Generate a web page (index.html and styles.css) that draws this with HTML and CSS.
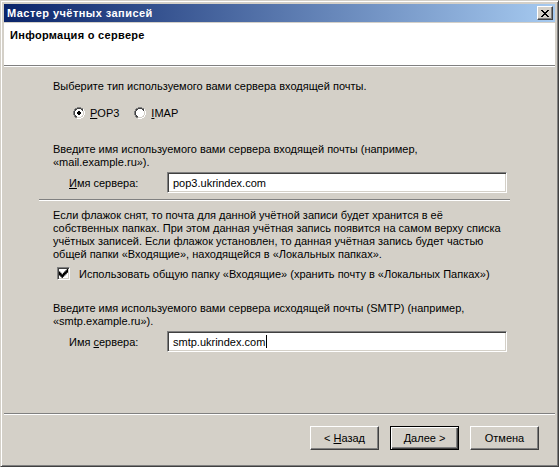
FILE: index.html
```html
<!DOCTYPE html>
<html lang="ru">
<head>
<meta charset="utf-8">
<title>Мастер учётных записей</title>
<link rel="stylesheet" href="styles.css">
</head>
<body>
<div class="window">
  <div class="titlebar">
    <span class="title-text">Мастер учётных записей</span>
    <span class="close-btn"><svg width="8" height="7" viewBox="0 0 8 7"><path d="M0 0h2v1h1v1h2V1h1V0h2v1H7v1H6v1H5v1h1v1h1v1h1v1H6V6H5V5H3v1H2v1H0V6h1V5h1V4h1V3H2V2H1V1H0z" fill="#000"/></svg></span>
  </div>
  <div class="header">
    <div class="header-title">Информация о сервере</div>
  </div>
  <div class="content">
    <p class="text first">Выберите тип используемого вами сервера входящей почты.</p>
    <div class="radio-row">
      <label class="radio"><span class="radio-box checked"><svg width="12" height="12" viewBox="0 0 12 12"><path d="M4 0h4v1h2v1h1v2h1v4h-1v2h-1v1H8v1H4v-1H2v-1H1V8H0V4h1V2h1V1h2z" fill="#808080"/><path d="M4 1h4v1h2v2h1v4h-1v2H8v1H4v-1H2V8H1V4h1V2h2z" fill="#404040"/><path d="M10 2h1v2h1v4h-1v2h-1v1H8v1H4v-1h4v-1h2V8h1V4h-1z" fill="#fff"/><path d="M10 3v1h1v4h-1v2H8v1H4v-1h4V8h2V4z" fill="#d4d0c8"/><path d="M4 2h4v1h1v1h1v4H9v1H8v1H4V9H3V8H2V4h1V3h1z" fill="#fff"/><path d="M5 4h2v1h1v2H7v1H5V7H4V5h1z" fill="#000"/></svg></span><span><u>P</u>OP3</span></label>
      <label class="radio"><span class="radio-box"><svg width="12" height="12" viewBox="0 0 12 12"><path d="M4 0h4v1h2v1h1v2h1v4h-1v2h-1v1H8v1H4v-1H2v-1H1V8H0V4h1V2h1V1h2z" fill="#808080"/><path d="M4 1h4v1h2v2h1v4h-1v2H8v1H4v-1H2V8H1V4h1V2h2z" fill="#404040"/><path d="M10 2h1v2h1v4h-1v2h-1v1H8v1H4v-1h4v-1h2V8h1V4h-1z" fill="#fff"/><path d="M10 3v1h1v4h-1v2H8v1H4v-1h4V8h2V4z" fill="#d4d0c8"/><path d="M4 2h4v1h1v1h1v4H9v1H8v1H4V9H3V8H2V4h1V3h1z" fill="#fff"/></svg></span><span><u>I</u>MAP</span></label>
    </div>
    <p class="text section">Введите имя используемого вами сервера входящей почты (например,<br>«mail.example.ru»).</p>
    <div class="field-row">
      <span class="field-label"><u>И</u>мя сервера:</span>
      <span class="field-input">pop3.ukrindex.com</span>
    </div>
    <div class="divider"></div>
    <p class="text para">Если флажок снят, то почта для данной учётной записи будет хранится в её<br>собственных папках. При этом данная учётная запись появится на самом верху списка<br>учётных записей. Если флажок установлен, то данная учётная запись будет частью<br>общей папки «Входящие», находящейся в «Локальных папках».</p>
    <label class="check-row">
      <span class="check-box"><svg width="9" height="9" viewBox="0 0 7 7"><path d="M6 0h1v3H6v1H5v1H4v1H3v1H2V6H1V5H0V2h1v1h1v1h1V3h1V2h1V1h1z" fill="#000"/></svg></span>
      <span>Использовать общую папку «Входящие» (хранить почту в «Локальных Папках»)</span>
    </label>
    <p class="text section2">Введите имя используемого вами сервера исходящей почты (SMTP) (например,<br>«smtp.example.ru»).</p>
    <div class="field-row">
      <span class="field-label">Имя <u>с</u>ервера:</span>
      <span class="field-input">smtp.ukrindex.com<span class="caret"></span></span>
    </div>
  </div>
  <div class="footer">
    <div class="footer-line"></div>
    <div class="buttons">
      <span class="btn"><span>&lt; <u>Н</u>азад</span></span>
      <span class="btn default"><span><u>Д</u>алее &gt;</span></span>
      <span class="btn"><span>Отмена</span></span>
    </div>
  </div>
</div>
</body>
</html>
```
FILE: styles.css
```css
* { box-sizing: border-box; }
html, body { margin: 0; padding: 0; }
body {
  width: 559px;
  height: 467px;
  overflow: hidden;
  background: #d4d0c8;
  font-family: "Liberation Sans", Arial, sans-serif;
  font-size: 11px;
  color: #000;
}
.window {
  width: 559px;
  height: 467px;
  background: #d4d0c8;
  border-top: 1px solid #d4d0c8;
  border-left: 1px solid #d4d0c8;
  border-right: 1px solid #404040;
  border-bottom: 1px solid #404040;
  display: flex;
  flex-direction: column;
  box-shadow: inset 1px 1px 0 #fff, inset -1px -1px 0 #808080;
  padding: 3px;
}
.titlebar {
  height: 18px;
  flex: none;
  background: linear-gradient(to right, #0a246a, #a6caf0);
  display: flex;
  align-items: center;
  justify-content: space-between;
  padding: 0 2px 0 3px;
  color: #fff;
  font-weight: bold;
}
.title-text { line-height: 18px; letter-spacing: 0.45px; }
.close-btn {
  width: 16px;
  height: 14px;
  background: #d4d0c8;
  border-top: 1px solid #fff;
  border-left: 1px solid #fff;
  border-right: 1px solid #404040;
  border-bottom: 1px solid #404040;
  box-shadow: inset -1px -1px 0 #808080;
  display: flex;
  align-items: center;
  justify-content: center;
  padding-right: 1px;
}
.close-btn svg { display: block; }
.header {
  margin-top: 1px;
  height: 43px;
  flex: none;
  background: #fff;
  border-bottom: 1px solid #808080;
  box-shadow: 0 1px 0 #fff;
  padding: 6px 0 0 6px;
}
.header-title {
  font-weight: bold;
  line-height: 13px;
  letter-spacing: 0.3px;
}
.content {
  flex: 1;
  padding: 13px 0 0 49px;
  margin-top: 1px;
}
.text {
  margin: 0;
  line-height: 13px;
}
.radio-row {
  display: flex;
  margin: 13px 0 0 20px;
  gap: 15px;
  height: 13px;
  align-items: center;
}
.radio {
  display: flex;
  align-items: center;
  gap: 5px;
}
.radio-box { width: 12px; height: 12px; display: block; }
.radio-box svg { display: block; }
.section { margin-top: 24px; }
.field-row {
  display: flex;
  align-items: center;
  margin: 3px 0 0 16px;
  height: 21px;
}
.field-label { width: 98px; }
.field-input {
  width: 340px;
  height: 21px;
  background: #fff;
  border-top: 1px solid #808080;
  border-left: 1px solid #808080;
  border-right: 1px solid #fff;
  border-bottom: 1px solid #fff;
  box-shadow: inset 1px 1px 0 #404040, inset -1px -1px 0 #d4d0c8;
  padding: 0 0 0 5px;
  display: flex;
  align-items: center;
}
.caret {
  display: inline-block;
  width: 1px;
  height: 13px;
  background: #000;
  margin-left: 1px;
}
.divider {
  margin: 6px 0 0 -14px;
  width: 471px;
  height: 2px;
  border-top: 1px solid #808080;
  border-bottom: 1px solid #fff;
}
.para { margin-top: 8px; }
.check-row {
  display: flex;
  align-items: center;
  gap: 9px;
  margin: 6px 0 0 4px;
  height: 13px;
}
.check-box {
  width: 13px;
  height: 13px;
  background: #fff;
  border-top: 1px solid #808080;
  border-left: 1px solid #808080;
  border-right: 1px solid #fff;
  border-bottom: 1px solid #fff;
  box-shadow: inset 1px 1px 0 #404040, inset -1px -1px 0 #d4d0c8;
  display: flex;
  align-items: center;
  justify-content: center;
}
.check-box svg { display: block; }
.section2 { margin-top: 22px; }
.footer {
  flex: none;
  height: 50px;
}
.footer-line {
  height: 2px;
  border-top: 1px solid #808080;
  border-bottom: 1px solid #fff;
}
.buttons {
  display: flex;
  justify-content: flex-end;
  gap: 11px;
  padding: 11px 16px 0 0;
}
.btn {
  width: 69px;
  height: 24px;
  display: flex;
  align-items: center;
  justify-content: center;
  background: #d4d0c8;
  border-top: 1px solid #fff;
  border-left: 1px solid #fff;
  border-right: 1px solid #404040;
  border-bottom: 1px solid #404040;
  box-shadow: inset -1px -1px 0 #808080;
}
.btn.default {
  border: 1px solid #000;
  box-shadow: inset 1px 1px 0 #fff, inset -1px -1px 0 #404040, inset -2px -2px 0 #808080;
}
u { text-decoration: underline; }
```
